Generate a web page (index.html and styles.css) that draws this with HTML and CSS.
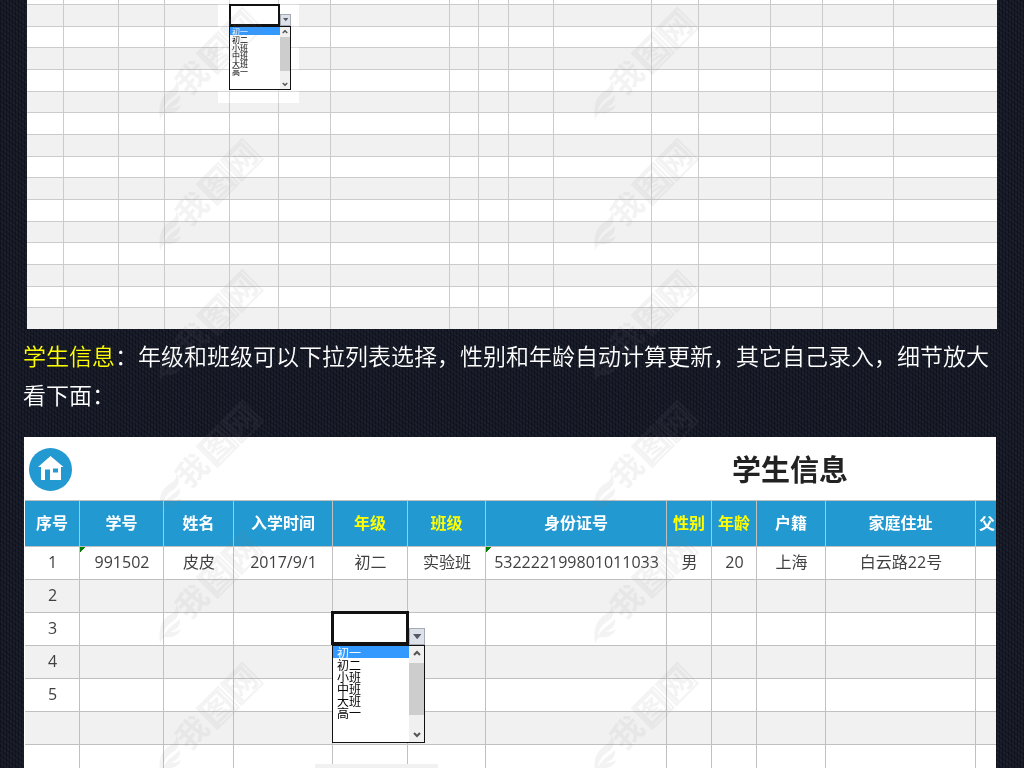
FILE: index.html
```html
<!DOCTYPE html>
<html lang="zh-CN">
<head>
<meta charset="utf-8">
<title>学生信息</title>
<link rel="stylesheet" href="styles.css">
</head>
<body>
<main class="page">
  <div class="preview">
    <table class="grid" aria-label="空白表格">
      <colgroup>
        <col style="width:37px"><col style="width:55px"><col style="width:46px"><col style="width:65px"><col style="width:49px"><col style="width:52px"><col style="width:119px"><col style="width:29px"><col style="width:30px"><col style="width:45px"><col style="width:98px"><col style="width:47px"><col style="width:72px"><col style="width:52px"><col style="width:71px"><col>
      </colgroup>
      <tbody id="grid-rows">
        <tr class="first"><td></td><td></td><td></td><td></td><td></td><td></td><td></td><td></td><td></td><td></td><td></td><td></td><td></td><td></td><td></td><td></td></tr>
        <tr><td></td><td></td><td></td><td></td><td class="anchor">
          <div class="halo"></div>
          <div class="picker small">
            <div class="cell"></div>
            <button class="drop" aria-label="展开"><svg viewBox="0 0 8 5"><path d="M0 0h8L4 5z"/></svg></button>
            <div class="list">
              <select size="6" aria-label="年级"><option selected>初一</option><option>初二</option><option>小班</option><option>中班</option><option>大班</option><option>高一</option></select>
              <div class="bar"><svg viewBox="0 0 8 6"><path d="M1 5l3-3 3 3"/></svg><span class="thumb"></span><svg viewBox="0 0 8 6"><path d="M1 1l3 3 3-3"/></svg></div>
            </div>
          </div>
        </td><td></td><td></td><td></td><td></td><td></td><td></td><td></td><td></td><td></td><td></td><td></td></tr>
      </tbody>
    </table>
  </div>

  <p class="note"><span class="key">学生信息</span><span>：年级和班级可以下拉列表选择，性别和年龄自动计算更新，其它自己录入，细节放大看下面：</span></p>

  <section class="sheet">
    <header class="head">
      <a class="home" href="#" aria-label="首页"><svg viewBox="0 0 43 43"><circle cx="21.500" cy="21.500" r="21.500" fill="#2299d0"/><path fill="#fff" fill-rule="evenodd" d="M21.500 8L34.500 19H32V32H21V21.500H16V32H12V19H9zM24 20.500v4h5v-4z"/></svg></a>
      <h1>学生信息</h1>
    </header>
    <table class="data">
      <colgroup>
        <col style="width:55px"><col style="width:84px"><col style="width:70px"><col style="width:99px"><col style="width:75px"><col style="width:78px"><col style="width:181px"><col style="width:45px"><col style="width:45px"><col style="width:69px"><col style="width:150px"><col>
      </colgroup>
      <thead>
        <tr><th>序号</th><th>学号</th><th>姓名</th><th>入学时间</th><th class="auto">年级</th><th class="auto">班级</th><th>身份证号</th><th class="auto">性别</th><th class="auto">年龄</th><th>户籍</th><th>家庭住址</th><th class="cut">父</th></tr>
      </thead>
      <tbody>
        <tr><td>1</td><td class="flag">991502</td><td>皮皮</td><td>2017/9/1</td><td>初二</td><td>实验班</td><td class="flag">532222199801011033</td><td>男</td><td>20</td><td>上海</td><td>白云路22号</td><td></td></tr>
        <tr><td>2</td><td></td><td></td><td></td><td></td><td></td><td></td><td></td><td></td><td></td><td></td><td></td></tr>
        <tr><td>3</td><td></td><td></td><td></td><td class="anchor">
          <div class="picker large">
            <div class="cell"></div>
            <button class="drop" aria-label="展开"><svg viewBox="0 0 8 5"><path d="M0 0h8L4 5z"/></svg></button>
            <div class="list">
              <select size="6" aria-label="年级"><option selected>初一</option><option>初二</option><option>小班</option><option>中班</option><option>大班</option><option>高一</option></select>
              <div class="bar"><svg viewBox="0 0 8 6"><path d="M1 5l3-3 3 3"/></svg><span class="thumb"></span><svg viewBox="0 0 8 6"><path d="M1 1l3 3 3-3"/></svg></div>
            </div>
          </div>
        </td><td></td><td></td><td></td><td></td><td></td><td></td><td></td></tr>
        <tr><td>4</td><td></td><td></td><td></td><td></td><td></td><td></td><td></td><td></td><td></td><td></td><td></td></tr>
        <tr><td>5</td><td></td><td></td><td></td><td></td><td></td><td></td><td></td><td></td><td></td><td></td><td></td></tr>
        <tr><td></td><td></td><td></td><td></td><td></td><td></td><td></td><td></td><td></td><td></td><td></td><td></td></tr>
        <tr><td></td><td></td><td></td><td></td><td class="anchor"><div class="shade"></div></td><td></td><td></td><td></td><td></td><td></td><td></td><td></td></tr>
      </tbody>
    </table>
  </section>
</main>
<svg class="watermark" aria-hidden="true">
  <defs>
    <pattern id="mark" x="155" y="2" width="435" height="131" patternUnits="userSpaceOnUse">
      <path class="leaf" d="M5 118C3 102 6 94 16 88C20 85 22 83 21 78C26 85 24 91 18 95C12 99 9 103 8 110C13 101 19 99 25 93C26 100 21 104 15 106C20 106 23 105 26 103C24 110 16 112 10 111C7 113 6 115 5 118z"/>
      <g transform="translate(37 76) rotate(-45)">
        <rect x="21" y="-14" width="30" height="29"/>
        <rect x="55" y="-14" width="30" height="29"/>
        <text x="-15" y="11">我</text><text x="20" y="11">图</text><text x="54" y="11">网</text>
      </g>
    </pattern>
  </defs>
  <rect class="fill" width="100%" height="100%" fill="url(#mark)"/>
</svg>
<script src="grid.js"></script>
</body>
</html>
```
FILE: styles.css
```css
* { box-sizing: border-box; }

body {
  margin: 0;
  height: 100vh;
  overflow: hidden;
  position: relative;
  background-color: #161926;
  background-image:
    repeating-linear-gradient(90deg, rgba(0, 0, 0, .28) 0 1px, transparent 1px 3px),
    repeating-linear-gradient(35deg, rgba(60, 66, 88, .22) 0 1px, transparent 1px 4px);
  font-family: "Open Sans", "Noto Sans CJK SC", sans-serif;
  color: #404040;
}

table {
  width: 100%;
  table-layout: fixed;
  border-collapse: separate;
  border-spacing: 0;
}

td, th { padding: 0; }

.anchor { position: relative; }

.preview {
  margin: 0 27px;
  background: #fff;
}

.grid td {
  height: 22px;
  border-right: 1px solid #cbcbcb;
  border-bottom: 1px solid #cbcbcb;
}
.grid tr:nth-child(3n) td { height: 21px; }
.grid tr.first td { height: 5px; }
.grid tr:nth-child(even) td { background: #f1f1f1; }
.grid td:last-child { border-right: 0; }
.grid tr:last-child td { height: 21px; border-bottom: 0; }

.halo {
  position: absolute;
  left: -12px;
  top: -5px;
  width: 81px;
  height: 103px;
  background: #101010;
  mix-blend-mode: color-dodge;
}

.note {
  margin: 7px 24px 23px 23px;
  font: 350 23px/39px "Noto Sans CJK SC", sans-serif;
  color: #fff;
}
.key { color: #ff0; }

.sheet {
  margin: 0 28px 0 24px;
  background: #fff;
  overflow: hidden;
}

.head {
  display: flex;
  align-items: center;
  height: 63px;
  padding: 2px 0 0 5px;
}
.home, .home svg { display: block; width: 43px; height: 43px; }
.head h1 {
  flex: 1;
  margin: 0;
  padding-left: 512px;
  text-align: center;
  font-size: 29px;
  line-height: 40px;
  color: #222;
}

.data { border-left: 1px solid #fff; }
.data th {
  height: 47px;
  padding-bottom: 2px;
  background: #2299d0;
  color: #fff;
  font-size: 16px;
  line-height: 20px;
  white-space: nowrap;
  border: solid #c0c0c0;
  border-width: 1px 1px 1px 0;
}
.data th.auto { color: #ff0; }
.data th.cut { text-align: left; padding-left: 3px; }
.data td {
  height: 33px;
  padding: 0 0 2px 1px;
  text-align: center;
  font-size: 16px;
  line-height: 20px;
  border-right: 1px solid #c0c0c0;
  border-bottom: 1px solid #c0c0c0;
}
.data tr > :last-child { border-right: 0; }
.data tbody tr:nth-child(even) td { background: #f1f1f1; }
.data td.flag {
  background: linear-gradient(135deg, #008000 4px, transparent 4px);
}

.shade {
  position: absolute;
  left: -18px;
  top: 19px;
  width: 123px;
  height: 14px;
  background: #f1f1f1;
}

.picker {
  position: absolute;
  display: grid;
  align-items: end;
}
.picker .cell {
  background: #fff;
  border: 2px solid #111;
}
.small { left: -1px; top: -1px; grid-template: 22px 64px / 51px 11px; }
.large { left: -2px; top: -2px; grid-template: 34px 98px / 78px 16px; }
.picker .cell { align-self: stretch; }
.large .cell { border-width: 3px; }

.drop {
  display: flex;
  align-items: center;
  justify-content: center;
  width: 100%;
  padding: 0;
  background: #dde1ea;
  border: 1px solid #a6aab4;
}
.small .drop { height: 12px; }
.large .drop { height: 17px; }
.drop svg { width: 60%; fill: #555a66; }

.list {
  grid-column: 1 / 3;
  align-self: stretch;
  display: flex;
  background: #fff;
  border: 1px solid #111;
}
.large .list { margin-left: 1px; }
.list select {
  flex: 1;
  min-width: 0;
  height: 100%;
  padding: 0;
  border: 0;
  border-radius: 0;
  outline: 0;
  background: #fff;
  color: #000;
  overflow: hidden;
  scrollbar-width: none;
  font-family: "Noto Sans CJK SC", sans-serif;
}
.list option {
  display: flex;
  align-items: center;
  min-height: 0;
  color: #000;
}
.list option:checked {
  background: #3399ff linear-gradient(#3399ff, #3399ff);
  color: #fff;
}
.small select { font-size: 8px; }
.small option { height: 8px; padding: 0 2px; }
.large select { font-size: 12px; }
.large option { height: 12px; padding: 0 4px; }

.bar {
  display: flex;
  flex-direction: column;
  align-items: center;
  justify-content: space-between;
  background: #f0f0f0;
}
.small .bar { width: 10px; padding: 2px 0; }
.large .bar { width: 15px; padding: 4px 0; }
.bar svg { width: 8px; height: 6px; fill: none; stroke: #555; stroke-width: 2; }
.small .bar svg { width: 6px; height: 5px; }
.thumb { width: 100%; background: #cdcdcd; }
.small .thumb { height: 34px; margin-bottom: 9px; }
.large .thumb { height: 52px; margin-bottom: 10px; }

.watermark {
  position: absolute;
  inset: 0;
  width: 100%;
  height: 100%;
  pointer-events: none;
  opacity: .09;
}
.watermark pattern rect {
  fill: none;
  stroke: #888;
  stroke-width: 2;
}
.watermark .leaf { fill: #888; }
.watermark text {
  font: 700 31px "Noto Sans CJK SC", sans-serif;
  fill: #888;
}
```
FILE: grid.js
```js
const rows = document.getElementById("grid-rows");
for (let i = 0; i < 14; i++) {
  const row = rows.insertRow();
  for (let c = 0; c < 16; c++) row.insertCell();
}
```
